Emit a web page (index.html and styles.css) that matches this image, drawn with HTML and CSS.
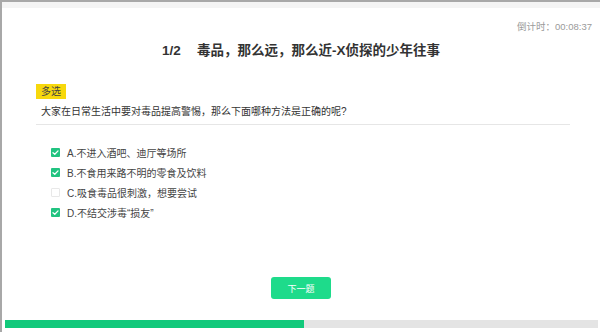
FILE: index.html
```html
<!DOCTYPE html>
<html lang="zh">
<head>
<meta charset="utf-8">
<link rel="stylesheet" href="styles.css">
</head>
<body>
<div class="frame">
  <div class="strip"></div>
  <div class="timer">倒计时：00:08:37</div>
  <h1 class="title"><span class="num">1/2</span>毒品，那么远，那么近-X侦探的少年往事</h1>
  <div class="quiz">
    <span class="tag">多选</span>
    <p class="question">大家在日常生活中要对毒品提高警惕，那么下面哪种方法是正确的呢?</p>
    <div class="divider"></div>
    <ul class="options">
      <li class="option"><span class="box checked"><svg viewBox="0 0 10 10" width="9" height="9"><path d="M2.2 5.2 L4.2 7 L7.8 3.2" fill="none" stroke="#fff" stroke-width="1.4" stroke-linecap="round" stroke-linejoin="round"/></svg></span>A.不进入酒吧、迪厅等场所</li>
      <li class="option"><span class="box checked"><svg viewBox="0 0 10 10" width="9" height="9"><path d="M2.2 5.2 L4.2 7 L7.8 3.2" fill="none" stroke="#fff" stroke-width="1.4" stroke-linecap="round" stroke-linejoin="round"/></svg></span>B.不食用来路不明的零食及饮料</li>
      <li class="option"><span class="box"></span>C.吸食毒品很刺激，想要尝试</li>
      <li class="option"><span class="box checked"><svg viewBox="0 0 10 10" width="9" height="9"><path d="M2.2 5.2 L4.2 7 L7.8 3.2" fill="none" stroke="#fff" stroke-width="1.4" stroke-linecap="round" stroke-linejoin="round"/></svg></span>D.不结交涉毒“损友”</li>
    </ul>
  </div>
  <div class="actions"><button class="next">下一题</button></div>
  <div class="progress"><div class="fill" style="width:50.4%"></div></div>
</div>
</body>
</html>
```

FILE: styles.css
```css
html, body {
  margin: 0;
  padding: 0;
  background: #fff;
}
body {
  font-family: "Liberation Sans", "Noto Sans CJK SC", sans-serif;
  color: #333;
}
.frame {
  width: 600px;
  height: 332px;
  box-sizing: border-box;
  border-top: 2px solid #a8a8a8;
  border-left: 2px solid #a8a8a8;
  display: flex;
  flex-direction: column;
}
.strip {
  height: 6px;
  background: #f4f4f4;
}
.timer {
  margin-top: 13px;
  padding-right: 8px;
  text-align: right;
  font-size: 9.5px;
  line-height: 12px;
  color: #9a9a9a;
}
.title {
  margin: 9px 0 0;
  text-align: center;
  font-size: 13.5px;
  line-height: 18px;
  font-weight: bold;
  color: #333;
}
.num {
  margin-right: 16px;
}
.quiz {
  padding-left: 34px;
  display: flex;
  flex-direction: column;
  align-items: flex-start;
}
.tag {
  margin-top: 24px;
  padding: 0 5px;
  height: 15px;
  line-height: 15px;
  font-size: 10px;
  background: #f7d80c;
  color: #444;
}
.question {
  margin: 6px 0 0 5px;
  font-size: 10px;
  line-height: 14px;
  color: #333;
}
.divider {
  margin-top: 5px;
  align-self: stretch;
  margin-right: 30px;
  height: 1px;
  background: #e6e6e6;
}
.options {
  list-style: none;
  margin: 17px 0 0;
  padding: 0 0 0 15px;
}
.option {
  display: flex;
  align-items: center;
  height: 20px;
  font-size: 10px;
  color: #444;
}
.box {
  width: 9px;
  height: 9px;
  box-sizing: border-box;
  border: 1px solid #e8e8e8;
  border-radius: 1px;
  margin-right: 7px;
  display: flex;
}
.box.checked {
  border: none;
  background: #22c381;
}
.actions {
  margin-top: 55px;
  display: flex;
  justify-content: center;
}
.next {
  width: 60px;
  height: 22px;
  border: none;
  border-radius: 3px;
  background: #1edb8b;
  color: #fff;
  font-family: "Liberation Sans", "Noto Sans CJK SC", sans-serif;
  font-size: 9px;
  padding: 0;
}
.progress {
  margin: 21px 2px 0 3px;
  height: 8px;
  background: #e4e4e4;
}
.fill {
  height: 100%;
  background: #12c97b;
}
```
